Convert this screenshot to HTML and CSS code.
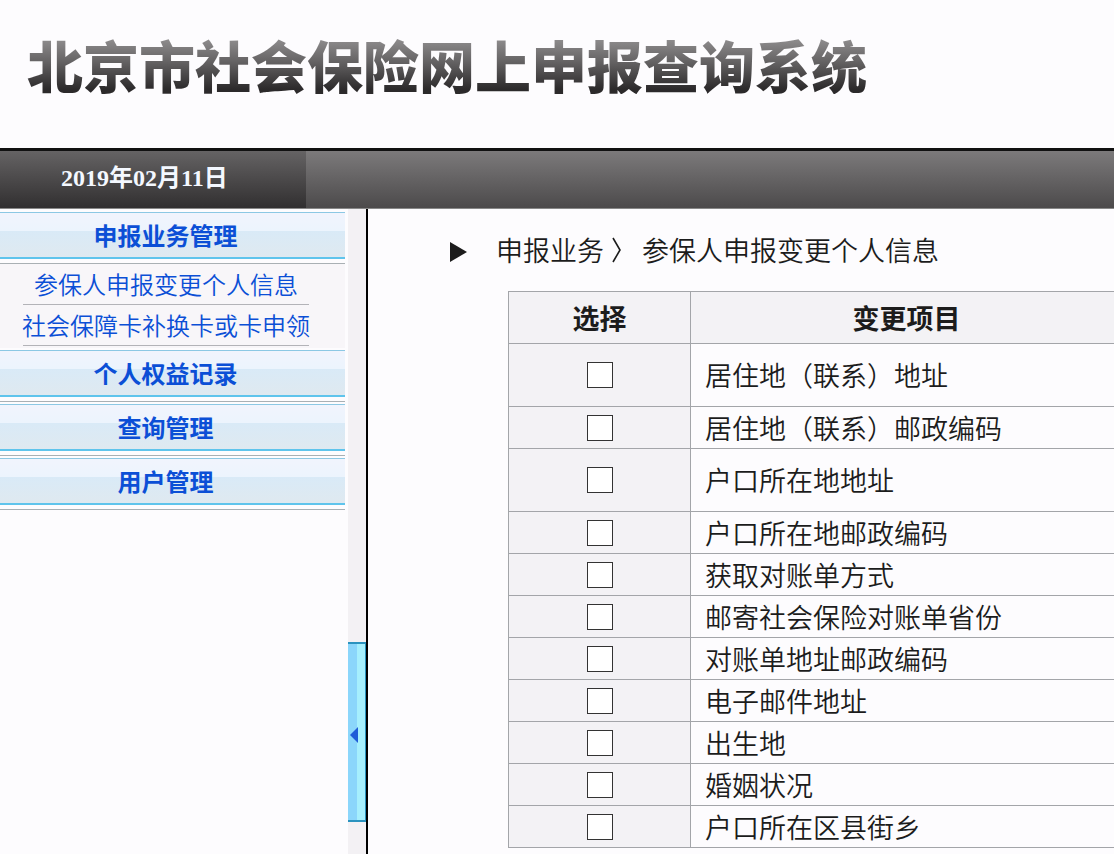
FILE: index.html
```
<!DOCTYPE html>
<html lang="zh-CN">
<head>
  <meta charset="UTF-8">
  <title>北京市社会保险网上申报查询系统</title>
  <link rel="stylesheet" href="styles.css">
</head>
<body>

  <header class="header">
    <h1>北京市社会保险网上申报查询系统</h1>
  </header>

  <div class="topbar">
    <div class="date">2019年02月11日</div>
  </div>

  <div class="page">
    <nav class="sidebar">
      <div class="group">
        <h2><a href="#">申报业务管理</a></h2>
        <ul>
          <li><a href="#">参保人申报变更个人信息</a></li>
          <li><a href="#">社会保障卡补换卡或卡申领</a></li>
        </ul>
      </div>
      <div class="group">
        <h2><a href="#">个人权益记录</a></h2>
      </div>
      <div class="group">
        <h2><a href="#">查询管理</a></h2>
      </div>
      <div class="group">
        <h2><a href="#">用户管理</a></h2>
      </div>
    </nav>

    <div class="splitter">
      <button type="button" aria-label="收起菜单">
        <svg width="8" height="16" viewBox="0 0 8 16"><path d="M8 0v16L0 8z" fill="#1f5bd8"/></svg>
      </button>
    </div>

    <main class="content">
      <div class="breadcrumb">
        <svg width="18" height="24" viewBox="0 0 18 24"><path d="M0 4l17 10L0 24z" fill="#1c1c1c"/></svg>
        <span>申报业务</span>
        <svg class="sep" width="10" height="26" viewBox="0 0 10 26"><path d="M1 1l7 12-7 12" fill="none" stroke="#1c1c1c" stroke-width="1.6"/></svg>
        <span>参保人申报变更个人信息</span>
      </div>

      <table>
        <thead>
          <tr>
            <th class="select">选择</th>
            <th>变更项目</th>
          </tr>
        </thead>
        <tbody>
          <tr class="tall">
            <td class="select"><input type="checkbox" id="item1"></td>
            <td><label for="item1">居住地（联系）地址</label></td>
          </tr>
          <tr>
            <td class="select"><input type="checkbox" id="item2"></td>
            <td><label for="item2">居住地（联系）邮政编码</label></td>
          </tr>
          <tr class="tall">
            <td class="select"><input type="checkbox" id="item3"></td>
            <td><label for="item3">户口所在地地址</label></td>
          </tr>
          <tr>
            <td class="select"><input type="checkbox" id="item4"></td>
            <td><label for="item4">户口所在地邮政编码</label></td>
          </tr>
          <tr>
            <td class="select"><input type="checkbox" id="item5"></td>
            <td><label for="item5">获取对账单方式</label></td>
          </tr>
          <tr>
            <td class="select"><input type="checkbox" id="item6"></td>
            <td><label for="item6">邮寄社会保险对账单省份</label></td>
          </tr>
          <tr>
            <td class="select"><input type="checkbox" id="item7"></td>
            <td><label for="item7">对账单地址邮政编码</label></td>
          </tr>
          <tr>
            <td class="select"><input type="checkbox" id="item8"></td>
            <td><label for="item8">电子邮件地址</label></td>
          </tr>
          <tr>
            <td class="select"><input type="checkbox" id="item9"></td>
            <td><label for="item9">出生地</label></td>
          </tr>
          <tr>
            <td class="select"><input type="checkbox" id="item10"></td>
            <td><label for="item10">婚姻状况</label></td>
          </tr>
          <tr>
            <td class="select"><input type="checkbox" id="item11"></td>
            <td><label for="item11">户口所在区县街乡</label></td>
          </tr>
        </tbody>
      </table>
    </main>
  </div>

</body>
</html>
```

FILE: styles.css
```
* {
  box-sizing: border-box;
  margin: 0;
  padding: 0;
}

body {
  display: flex;
  flex-direction: column;
  min-height: 100vh;
  background-color: #fdfcfe;
  color: #1c1c1c;
  font-family: "Noto Sans CJK SC", sans-serif;
  font-weight: 350;
}

a {
  text-decoration: none;
  color: #0b4fd6;
}

.header {
  height: 148px;
  padding: 34px 27px 0;
}

.header h1 {
  font-size: 56px;
  font-weight: 900;
  line-height: 60px;
  white-space: nowrap;
  color: transparent;
  background: linear-gradient(#8f8d8e 8%, #666465 45%, #2c2a2b 92%);
  background-clip: text;
  -webkit-background-clip: text;
}

.topbar {
  display: flex;
  height: 61px;
  border-top: 3px solid #111;
  border-bottom: 1px solid #888;
  background: linear-gradient(#7c7a7b, #4c4a4b);
}

.date {
  width: 306px;
  padding-left: 61px;
  background: linear-gradient(#656364, #312f30);
  color: #f4f8ff;
  font-family: "Liberation Serif", "Noto Sans CJK SC", serif;
  font-size: 24px;
  font-weight: bold;
  line-height: 54px;
}

.page {
  display: flex;
  flex: 1;
}

/* side menu */
.sidebar {
  width: 348px;
  flex-shrink: 0;
  padding: 3px 3px 0 0;
}

.group {
  margin-bottom: 2px;
}

.group h2 {
  height: 47px;
  padding-right: 14px;
  border-top: 1px solid #8cc8e4;
  border-bottom: 2px solid #5fc4ec;
  background: linear-gradient(#f1f4fd 0, #ecf4fd 40%, #d9eaf7 41%, #dfe9f0 100%);
  font-size: 24px;
  font-weight: bold;
  line-height: 44px;
  text-align: center;
}

.group::after {
  content: "";
  display: block;
  margin-top: 4px;
  border-top: 1px solid #a9b0b4;
}

.group:has(ul)::after {
  display: none;
}

.group ul {
  list-style: none;
  margin-top: 4px;
  padding: 0 36px 2px 23px;
  border-top: 1px solid #a9b0b4;
  background-color: #f8f6f9;
}

.group li {
  display: flex;
  justify-content: center;
  height: 41px;
  border-bottom: 1px solid #b3b3b8;
  font-size: 24px;
  line-height: 40px;
  white-space: nowrap;
}

.splitter {
  width: 20px;
  flex-shrink: 0;
  padding-top: 433px;
  border-right: 2px solid #000;
  background-color: #f3f1f4;
}

.splitter button {
  display: flex;
  align-items: center;
  width: 100%;
  height: 180px;
  padding-left: 2px;
  padding-top: 5px;
  border: 0 solid #2b93bf;
  border-width: 2px 1px 2px 0;
  background: linear-gradient(to right, #8bd6fb 50%, #a6effd 55%);
}

.content {
  flex: 1;
  min-width: 0;
  overflow: hidden;
  padding: 21px 0 6px 82px;
}

.breadcrumb {
  display: flex;
  align-items: center;
  height: 40px;
  font-size: 27px;
  line-height: 40px;
  white-space: nowrap;
}

.breadcrumb span:first-of-type {
  margin-left: 28px;
}

.breadcrumb .sep {
  margin: 0 20px 0 8px;
}

/* the table runs past the right edge of the frame */
table {
  width: calc(100% - 49px);
  margin: 21px 0 0 58px;
  border-collapse: collapse;
  table-layout: fixed;
}

th, td {
  height: 42px;
  border: 1px solid #a3a5a9;
  font-size: 27px;
  line-height: 36px;
  white-space: nowrap;
}

th {
  height: 52px;
  background-color: #f3f2f5;
  font-weight: bold;
  text-align: center;
}

td {
  padding-left: 14px;
}

.tall td {
  height: 63px;
}

.select {
  width: 182px;
  padding: 0;
  background-color: #f3f2f5;
  text-align: center;
}

input[type="checkbox"] {
  appearance: none;
  display: block;
  width: 26px;
  height: 26px;
  margin: 0 auto;
  border: 1px solid #333;
  background-color: #fff;
}
```
